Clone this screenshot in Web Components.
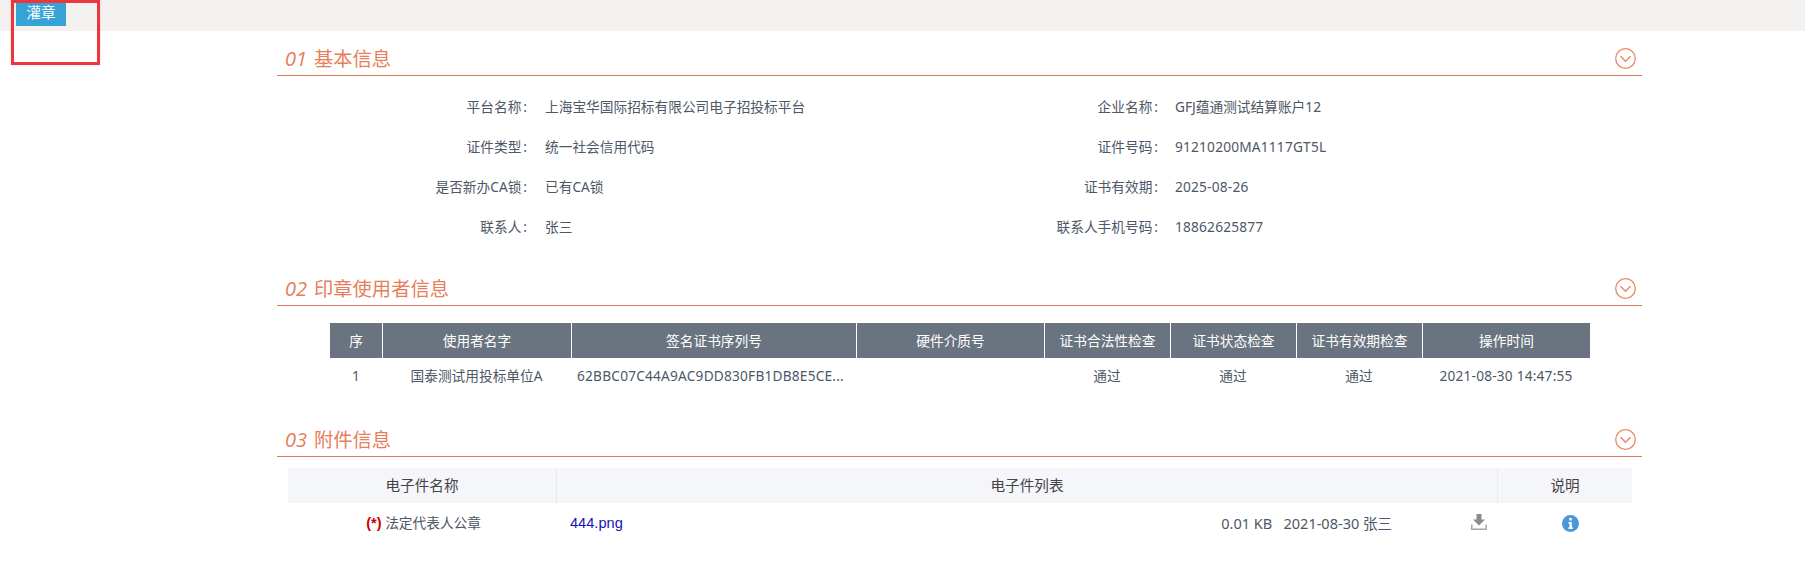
<!DOCTYPE html>
<html lang="zh">
<head>
<meta charset="utf-8">
<title>灌章</title>
<style>
  html, body { margin: 0; padding: 0; background: #fff; }
  body { font-family: "Noto Sans", "Noto Sans CJK SC", sans-serif; font-size: 14px; color: #4d5766; }
</style>
</head>
<body>
<top-bar label="灌章"></top-bar>
<page-body>
  <info-section num="01" heading="基本信息">
    <info-grid></info-grid>
  </info-section>
  <info-section num="02" heading="印章使用者信息">
    <user-table></user-table>
  </info-section>
  <info-section num="03" heading="附件信息">
    <attach-table></attach-table>
  </info-section>
</page-body>

<script>
(function () {
  var CN = '"Noto Sans", "Noto Sans CJK SC", sans-serif';

  // plain latin values run a little wider in the reference
  function valueClass(text) {
    return /^[\x00-\x7f]+$/.test(text) ? " latin" : "";
  }

  class TopBar extends HTMLElement {
    connectedCallback() {
      var root = this.attachShadow({ mode: "open" });
      root.innerHTML =
        "<style>" +
        ":host{display:block;height:31px;background:#f3f2f0;padding-left:16px;position:relative;}" +
        ".btn{display:block;width:50px;height:26px;background:#36a3d6;color:#fff;font:14.6px/25px " + CN + ";text-align:center;}" +
        ".mark{position:absolute;left:11px;top:0;width:83px;height:59px;border:3px solid #e8383d;box-shadow:0 0 2px rgba(232,56,61,.3);}" +
        "</style>" +
        "<span class='btn'>" + this.getAttribute("label") + "</span><div class='mark'></div>";
    }
  }

  class PageBody extends HTMLElement {
    connectedCallback() {
      var root = this.attachShadow({ mode: "open" });
      root.innerHTML =
        "<style>:host{display:block;width:1365px;margin-left:277px;}</style><slot></slot>";
    }
  }

  class InfoSection extends HTMLElement {
    connectedCallback() {
      var root = this.attachShadow({ mode: "open" });
      root.innerHTML =
        "<style>" +
        ":host{display:block;}" +
        ".head{box-sizing:border-box;height:45px;border-bottom:1px solid #dd7a58;display:flex;align-items:flex-end;justify-content:space-between;padding:0 6px 0 8px;color:#e67e5a;}" +
        ".title{font:19.3px/30px " + CN + ";display:flex;gap:7px;padding-bottom:1px;}" +
        ".num{font:italic 20px/30px 'Open Sans','Liberation Sans',sans-serif;}" +
        "svg{display:block;width:21px;height:21px;margin-bottom:6px;}" +
        "</style>" +
        "<div class='head'><div class='title'><span class='num'>" + this.getAttribute("num") + "</span><span>" + this.getAttribute("heading") + "</span></div>" +
        "<svg viewBox='0 0 21 21' fill='none' stroke='#e98a68'><circle cx='10.5' cy='10.5' r='9.8' stroke-width='1.3'/><path d='M5.500 8.200l5 5 5-5' stroke-width='1.5'/></svg></div>" +
        "<slot></slot>";
    }
  }

  class InfoGrid extends HTMLElement {
    connectedCallback() {
      var rows = [
        ["平台名称", "上海宝华国际招标有限公司电子招投标平台", "企业名称", "GFJ蕴通测试结算账户12"],
        ["证件类型", "统一社会信用代码", "证件号码", "91210200MA1117GT5L"],
        ["是否新办CA锁", "已有CA锁", "证书有效期", "2025-08-26"],
        ["联系人", "张三", "联系人手机号码", "18862625877"]
      ];
      var html = "";
      rows.forEach(function (r) {
        html +=
          "<div class='k'>" + r[0] + "<i>:</i></div>" +
          "<div class='v'>" + r[1] + "</div>" +
          "<div class='k'>" + r[2] + "<i>:</i></div>" +
          "<div class='v second" + valueClass(r[3]) + "'>" + r[3] + "</div>";
      });
      var root = this.attachShadow({ mode: "open" });
      root.innerHTML =
        "<style>" +
        ":host{display:grid;grid-template-columns:250px 431px 200px 1fr;grid-auto-rows:40px;padding:11px 0 14px;font:13.7px/40px " + CN + ";color:#4d5766;}" +
        ".k{text-align:right;white-space:nowrap;}" +
        ".k i{font-style:normal;margin-left:2px;}" +
        ".v{padding-left:18px;white-space:nowrap;}" +
        ".second{padding-left:17px;}" +
        ".latin{letter-spacing:.2px;}" +
        "</style>" + html;
    }
  }

  class UserTable extends HTMLElement {
    connectedCallback() {
      var cols = [
        ["序", 52, "1"],
        ["使用者名字", 189, "国泰测试用投标单位A"],
        ["签名证书序列号", 285, "62BBC07C44A9AC9DD830FB1DB8E5CE..."],
        ["硬件介质号", 188, ""],
        ["证书合法性检查", 126, "通过"],
        ["证书状态检查", 126, "通过"],
        ["证书有效期检查", 126, "通过"],
        ["操作时间", 168, "2021-08-30 14:47:55"]
      ];
      var tpl = cols.map(function (c) { return c[1] + "px"; }).join(" ");
      var head = "", row = "";
      cols.forEach(function (c) {
        head += "<div class='th'>" + c[0] + "</div>";
        row += "<div class='td" + valueClass(c[2]) + "'>" + c[2] + "</div>";
      });
      var root = this.attachShadow({ mode: "open" });
      root.innerHTML =
        "<style>" +
        ":host{display:block;padding:17px 0 18px 53px;}" +
        ".r{display:grid;grid-template-columns:" + tpl + ";}" +
        ".th{box-sizing:border-box;height:35px;background:#6a7480;color:#fff;font:13.7px/35px " + CN + ";text-align:center;border-left:1px solid #fff;}" +
        ".th:first-child{border-left:0;}" +
        ".td{box-sizing:border-box;height:36px;font:13.7px/36px " + CN + ";color:#4d5766;text-align:center;white-space:nowrap;}" +
        ".td:nth-child(3){padding-right:6px;}" +
        ".latin{letter-spacing:.2px;}" +
        "</style><div class='r'>" + head + "</div><div class='r'>" + row + "</div>";
    }
  }

  class AttachTable extends HTMLElement {
    connectedCallback() {
      var root = this.attachShadow({ mode: "open" });
      root.innerHTML =
        "<style>" +
        ":host{display:block;padding:11px 0 0 11px;width:1344px;font:14.6px/35px " + CN + ";color:#4d5766;}" +
        ".r{display:grid;grid-template-columns:268px 941px 135px;}" +
        ".h{background:#f5f6fa;height:35px;color:#444;}" +
        ".h div{text-align:center;}" +
        ".h div+div{border-left:1px solid #e9eaee;}" +
        ".name{text-align:right;padding-right:75px;font-size:13.7px;line-height:40px;}" +
        ".name b{color:#c00;font:bold 14.6px 'Liberation Sans',sans-serif;}" +
        ".files{display:flex;line-height:40px;padding-left:14px;}" +
        ".link{color:#1414b8;font:14.6px/40px 'Liberation Sans',sans-serif;}" +
        ".meta{margin-left:auto;font-size:14.5px;line-height:40px;white-space:pre;margin-right:79px;}" +
        ".dl{width:16px;height:16px;align-self:center;margin-right:10px;margin-top:-2px;}" +
        ".info{display:flex;align-items:center;justify-content:center;height:40px;padding-left:12px;}" +
        "svg{display:block;}" +
        "</style>" +
        "<div class='r h'><div>电子件名称</div><div>电子件列表</div><div>说明</div></div>" +
        "<div class='r'><div class='name'><b>(*)</b> 法定代表人公章</div>" +
        "<div class='files'><span class='link'>444.png</span><span class='meta'>0.01 KB   2021-08-30 张三</span>" +
        "<svg class='dl' viewBox='0 0 16 16'><path d='M5.500 0h5v5.500h3.500L8 11.500 2 5.500h3.500z' fill='#8a8a8a'/><path d='M.8 10.500v4.700h14.400v-4.700' fill='none' stroke='#a5a5a5' stroke-width='1.500'/></svg></div>" +
        "<div class='info'><svg width='17' height='17' viewBox='0 0 17 17'><circle cx='8.500' cy='8.500' r='8.500' fill='#4a96d9'/><rect x='7.200' y='3' width='2.600' height='2.500' fill='#fff'/><path d='M6.500 7h3.300v5.200h1V14h-4.300v-1.800h1V8.800h-1z' fill='#fff'/></svg></div></div>";
    }
  }

  customElements.define("top-bar", TopBar);
  customElements.define("page-body", PageBody);
  customElements.define("info-section", InfoSection);
  customElements.define("info-grid", InfoGrid);
  customElements.define("user-table", UserTable);
  customElements.define("attach-table", AttachTable);
})();
</script>
</body>
</html>
